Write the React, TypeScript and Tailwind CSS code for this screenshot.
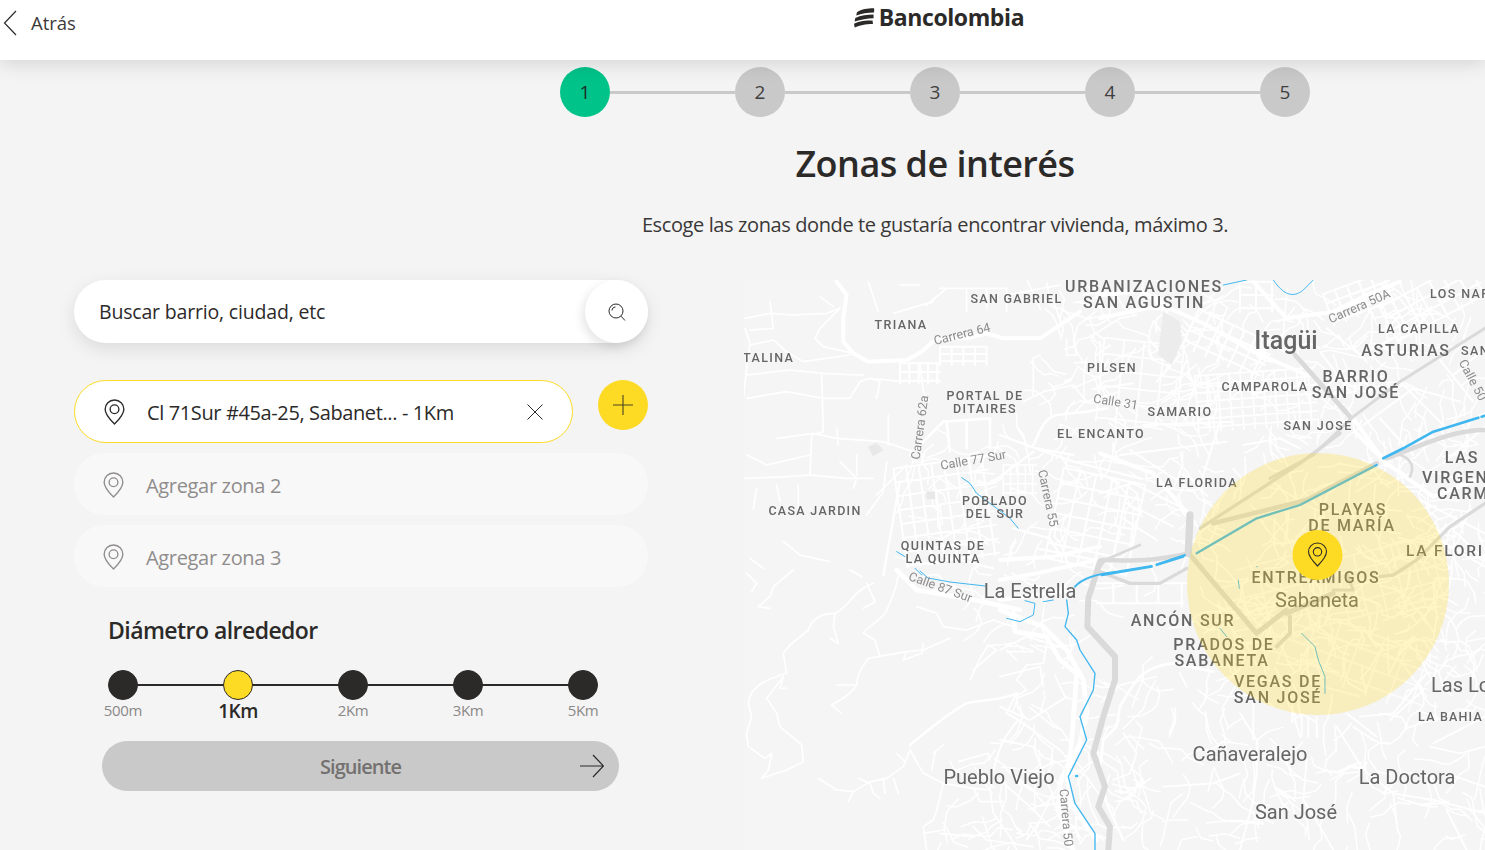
import React from "react";

const Pin = ({ className = "" }: { className?: string }) => (
  <svg viewBox="0 0 20 25" fill="none" stroke="currentColor" strokeWidth="1.3" className={className}>
    <path d="M10 1C4.8 1 1 5 1 9.8C1 15.2 10 24 10 24C10 24 19 15.2 19 9.8C19 5 15.2 1 10 1Z" strokeLinejoin="round" />
    <circle cx="10" cy="9.8" r="4.2" />
  </svg>
);

const grid = (x: number, y: number, w: number, h: number, sx: number, sy: number) => {
  let d = "";
  for (let i = x; i <= x + w; i += sx) d += `M${i} ${y}V${y + h}`;
  for (let j = y; j <= y + h; j += sy) d += `M${x} ${j}H${x + w}`;
  return d;
};

const walk = (seed: number, x: number, y: number, w: number, h: number, n: number, step = 12) => {
  let s = seed;
  const r = () => {
    s = (s * 16807) % 2147483647;
    return (s & 65535) / 65535;
  };
  let d = "";
  for (let i = 0; i < n; i++) {
    let px = x + r() * w;
    let py = y + r() * h;
    let a = r() * 6.28;
    d += `M${px.toFixed(1)} ${py.toFixed(1)}`;
    const len = 2 + Math.floor(r() * 4);
    for (let k = 0; k < len; k++) {
      a += (r() - 0.5) * 1.6;
      px += Math.cos(a) * step * (0.6 + r());
      py += Math.sin(a) * step * (0.6 + r());
      d += `L${px.toFixed(1)} ${py.toFixed(1)}`;
    }
  }
  return d;
};

const B = 16;
const BL = 1.75;
const S = 12.5;
const SL = 1.4;

const labels: [string, number, number, number, number, ("middle" | "start")?][] = [
  ["SAN GABRIEL", 1016.5, 303, S, 1.3],
  ["TRIANA", 901, 329, S, SL],
  ["URBANIZACIONES", 1144, 292, B, BL],
  ["SAN AGUSTIN", 1144, 308, B, BL],
  ["LOS NAR", 1430, 298, S, SL, "start"],
  ["LA CAPILLA", 1419, 333, S, SL],
  ["ASTURIAS", 1406, 356, B, BL],
  ["SAN", 1461, 355, S, SL, "start"],
  ["TALINA", 743, 362, S, SL, "start"],
  ["PILSEN", 1112, 372, S, SL],
  ["PORTAL DE", 985, 400, S, SL],
  ["DITAIRES", 985, 413, S, SL],
  ["CAMPAROLA", 1265, 391, S, SL],
  ["BARRIO", 1356, 382, B, BL],
  ["SAN JOSÉ", 1356, 398, B, BL],
  ["SAMARIO", 1180, 416, S, SL],
  ["SAN JOSE", 1318, 430, S, SL],
  ["EL ENCANTO", 1101, 438, S, SL],
  ["LAS", 1462, 463, B, BL],
  ["VIRGEN", 1422, 483, B, BL, "start"],
  ["CARM", 1437, 499, B, BL, "start"],
  ["LA FLORIDA", 1197, 487, S, SL],
  ["POBLADO", 995, 505, S, SL],
  ["DEL SUR", 995, 518, S, SL],
  ["CASA JARDIN", 815, 515, S, 1.3],
  ["PLAYAS", 1353, 515, B, BL],
  ["DE MARÍA", 1352, 531, B, BL],
  ["QUINTAS DE", 943, 550, S, SL],
  ["LA QUINTA", 943, 563, S, SL],
  ["LA FLORI", 1406, 556, 15.5, BL, "start"],
  ["ENTREAMIGOS", 1316, 583, B, BL],
  ["Sabaneta", 1317, 607, 20, 0],
  ["La Estrella", 1030, 598, 20, 0],
  ["ANCÓN SUR", 1183, 626, B, BL],
  ["PRADOS DE", 1224, 650, B, BL],
  ["SABANETA", 1222, 666, B, BL],
  ["VEGAS DE", 1278, 687, B, BL],
  ["SAN JOSÉ", 1278, 703, B, BL],
  ["Las Lo", 1431, 692, 20, 0, "start"],
  ["LA BAHIA", 1450.5, 721, S, 1.2],
  ["Cañaveralejo", 1250, 761, 20, 0],
  ["Pueblo Viejo", 999, 784, 20, 0],
  ["La Doctora", 1407, 784, 20, 0],
  ["San José", 1296, 819, 20, 0],
];

const roadLabels: [string, number, number, number][] = [
  ["Carrera 64", 963, 338, -14],
  ["Carrera 50A", 1361, 310, -24],
  ["Calle 31", 1115, 406, 9],
  ["Carrera 62a", 924, 428, -82],
  ["Calle 77 Sur", 974, 464, -10],
  ["Carrera 55", 1044, 499, 78],
  ["Calle 50", 1469, 382, 62],
  ["Calle 87 Sur", 939, 591, 20],
  ["Carrera 50", 1062, 818, 85],
];

const MapView = () => (
  <svg viewBox="744 280 741 570" className="block w-full h-full font-['Roboto',sans-serif]">
    <rect x="744" y="280" width="741" height="570" fill="#f5f5f5" />
    <g fill="none" stroke="#ffffff" strokeLinecap="round" strokeLinejoin="round">
      {/* organic street tangles */}
      <g strokeWidth="1.5">
        <path d={walk(11, 905, 440, 190, 170, 70, 9)} />
        <path d={walk(23, 1040, 285, 180, 150, 70, 10)} />
        <path d={walk(37, 1190, 300, 290, 170, 150, 10)} />
        <path d={walk(41, 1200, 480, 260, 220, 170, 10)} />
        <path d={walk(53, 1400, 500, 85, 240, 50, 10)} />
        <path d={walk(67, 1110, 650, 110, 200, 45, 11)} />
        <path d={walk(71, 1210, 720, 275, 130, 70, 11)} />
        <path d={walk(83, 1010, 620, 90, 230, 45, 11)} />
        <path d={walk(97, 940, 770, 140, 80, 28, 11)} />
        <path d={walk(101, 1100, 440, 110, 120, 40, 10)} />
      </g>
      {/* western hills */}
      <g transform="translate(740 570) scale(.3333)" strokeWidth="5">
        <path d="M480 0C470 30 470 60 440 120C430 150 390 160 370 190L405 210L420 260M385 265L500 245L550 240L630 205M500 245L490 270L545 250L550 220" />
        <path d="M385 265C360 300 350 320 350 345L290 345M350 345C330 380 290 395 275 405L305 430" />
        <path d="M400 40C340 60 330 110 285 130C240 130 215 150 205 180L150 225L130 250L140 310C90 325 30 345 25 400L35 440L20 490L25 530L75 565L95 550L85 600L65 625L140 600L190 575L185 525L120 470L110 430L80 385L130 320L120 355H140" />
        <path d="M285 130L280 170L295 220L270 205M160 0L100 50L90 80L55 110L90 115M20 10L50 40L35 65M380 40L405 95L370 115M330 0L365 20" />
        <path d="M235 625L290 660L340 665L325 695M340 665L390 635L440 625L490 590L510 540M355 625L390 640L400 670L420 685M430 625L435 670M460 625L475 670M470 550L495 575" />
        <path strokeWidth="8" d="M510 525C570 475 640 420 680 400C720 390 790 390 830 370" />
        <path d="M510 540L550 610L610 640L700 655L750 660M610 640C600 680 590 730 580 750L550 770L560 840M700 655L720 695L790 695M750 660L760 730L810 800L830 840M580 550L610 525M575 600L585 550M655 575L745 550L750 570" />
        <path strokeWidth="6" d="M800 430L835 450C790 500 770 540 750 660" />
        <path d="M800 430L825 380L860 360L830 330L860 285L910 280L920 225M690 330L720 265L745 225L770 240L700 300M800 245L880 245M830 270L800 240M960 510H985M835 450L960 540L985 570M800 600L880 660L910 700M700 770L740 810L880 830M600 790L700 800M550 790L610 780" />
        <path strokeWidth="14" d="M470 0L530 60L680 85L840 120M820 130L825 185L920 200L960 270L1010 310L1000 450L990 570L960 640L955 720L1000 840" />
        <path strokeWidth="5" d="M530 110L590 130L610 170L680 180L760 150L820 170" />
      </g>
      {/* north-west */}
      <g transform="translate(740 275) scale(.3333)" strokeWidth="5">
        <path d="M290 20L320 60L310 130L310 200L340 235L385 260L500 255L545 230L590 190L680 190L740 175L790 190L900 190L990 130L1020 110" strokeWidth="12" />
        <path d="M300 100L240 160L225 190L250 215L340 235M240 65L280 95M385 20L415 110M480 30H540M460 115L580 80M620 40L560 90M600 40H800V110M680 40V110M740 40V100M800 60L960 30" />
        <path d="M15 130L90 115L160 120L260 115L300 100M15 160L30 205L20 280L10 370M90 80L100 160L30 165M30 210L100 195L140 230L190 260L330 240M20 300L150 285L250 295L350 300L370 300M20 370L140 350L250 370L330 370L360 320L390 310L490 320M245 300L250 470L215 480L210 600M110 490L220 475L290 490L430 500L520 530M290 460L295 510M20 540L80 570L210 540" />
        <path d="M15 610L140 605L210 600L320 610L400 610M50 640L40 700M110 630L120 680M175 630V700M300 560L350 610L340 640M350 540V600M380 720L430 650L440 560M445 420V510M130 800L180 840L270 860M30 850L70 880M410 660L500 570" />
        <path d="M390 310L420 320L410 370M540 270L550 350L570 380M880 360V250L900 240M1000 190L1010 240H980V190M1060 180L1140 130L1190 120M1070 240L1110 210M1080 260V200M850 380L910 350L1000 330L1040 380L1140 350" />
        <path strokeWidth="8" d="M880 510C900 470 910 430 950 420L1040 410L1100 400M510 540L610 440L750 430M750 430V520M620 440L630 530M680 440V520" />
        <path strokeWidth="7" d="M780 480L860 510L1000 560L1200 610M890 520L1000 540M880 530L840 560L760 620" />
        <path strokeWidth="6" transform="rotate(-8 620 710)" d={grid(480, 560, 280, 300, 38, 42)} />
        <path strokeWidth="4.5" d={grid(790, 570, 100, 90, 22, 28)} />
        <path strokeWidth="6" d={grid(480, 265, 120, 60, 28, 26)} />
        <path strokeWidth="6" d={grid(600, 215, 140, 55, 35, 22)} />
        <path strokeWidth="6" transform="rotate(12 1060 740)" d={grid(940, 600, 250, 280, 50, 46)} />
        <path strokeWidth="7" d="M430 900L480 620M600 840L760 880M890 820L1090 860M820 760L930 790L960 840" />
      </g>
      {/* Itagüí and the north-east */}
      <g transform="translate(1100 275) scale(.3333)" strokeWidth="6">
        <path strokeWidth="12" d="M0 130L140 100L210 100L320 150L460 230L620 300M130 50L210 100M0 60L100 50M560 130L700 110L800 60L900 20M460 20L560 130M760 430L860 570" />
        <path transform="rotate(25 385 210)" d={grid(260, 150, 250, 120, 38, 34)} />
        <path strokeWidth="5" transform="rotate(-4 470 375)" d={grid(290, 290, 360, 170, 34, 26)} />
        <path d={grid(420, 20, 100, 90, 48, 40)} />
        <path transform="rotate(-20 780 70)" d={grid(680, 20, 200, 100, 38, 30)} />
        <path transform="rotate(-28 1000 80)" d={grid(850, 20, 300, 120, 42, 38)} />
        <path d="M680 160L780 240L900 180M660 230L750 350M900 320L1040 460M790 450L940 340L1080 380M1000 230L1120 380M840 430L940 540M960 380L1020 440M1060 300L1155 220" />
        <path strokeWidth="5" transform="rotate(6 120 325)" d={grid(0, 200, 240, 250, 60, 48)} />
        <path d="M160 140L240 240L170 320M170 170C160 110 190 130 210 100M360 440L310 600M430 510L540 490L600 520" />
        <path d="M0 340L100 325M130 450L400 440M60 540L380 500" />
      </g>
      {/* central corridor and south */}
      <g transform="translate(1000 540) scale(.3333)" strokeWidth="5.5">
        <path strokeWidth="14" d="M0 210L130 260L200 330L250 420L260 520L240 610L200 690L210 790L290 900" />
        <path strokeWidth="12" d="M0 60L160 50L300 20M0 120L110 100L290 60M0 180L220 150" />
        <path strokeWidth="8" d="M360 500C400 430 420 380 520 370L640 395M360 500L350 560L310 600L300 690L320 790L370 900" />
        <path d="M290 130H560M340 130V190M410 130V190M475 130V190M545 130V200M290 190H550" strokeWidth="6" />
        <path d="M0 330L80 290L180 320M0 410L120 380L130 440M0 500L90 540L200 470M0 600L100 620L130 700M0 720L90 800L150 860M80 900L120 840M370 580L410 640L390 700L340 720M490 740L640 730L720 700M540 400L560 440M760 480V600M720 520L770 600" />
        <path strokeWidth="5.5" d="M880 520L900 590M905 530V590M925 530V590M950 530V590M1040 520L1130 590M1080 530L1180 520L1280 400M1060 560L1120 600M1010 560L1090 690L1180 760L1300 780L1455 820M770 600L770 700L760 780L720 930M920 660L910 780L960 860L1000 930M1180 760L1190 850M1300 610L1455 530M1290 620L1380 640L1455 620M1340 700L1455 740M1170 540L1270 450M1340 810L1400 930" />
        <g transform="translate(560 0)" strokeWidth="5" opacity=".8">
          <path transform="rotate(-14 450 160)" d={grid(120, 60, 660, 200, 58, 46)} />
          <path transform="rotate(20 480 350)" d={grid(220, 260, 520, 180, 70, 50)} />
          <path d="M150 90L420 20M180 200L300 180M420 280L560 340L700 300M380 330L410 440L520 470M640 360L720 470M620 200L780 120" />
        </g>
      </g>
      <g transform="translate(1100 420) scale(.3333)" strokeWidth="6">
        <path strokeWidth="12" d="M770 40L860 130L1000 230L1155 170M0 100L160 160L270 290" />
        <path d="M0 220L100 190L260 270M90 90L230 180M100 260L220 320M60 290L170 360M960 240L1155 340M1060 330L1155 420M1000 350L1155 440M1030 130L1155 20" />
      </g>
    </g>
    {/* highways */}
    <g fill="none" stroke="#dadada" strokeLinecap="round" strokeLinejoin="round">
      <g transform="translate(1100 275) scale(.3333)">
        <path strokeWidth="9" d="M1155 160L900 320L760 425L640 540L510 610" />
        <path strokeWidth="14" d="M585 240L750 425" />
        <path strokeWidth="1" stroke="#ececec" fill="#ececec" d="M190 110L240 140L245 200L215 270L175 240Z" />
      </g>
      <g transform="translate(1100 420) scale(.3333)">
        <path strokeWidth="10" d="M300 325L600 130L720 40" />
        <path strokeWidth="14" d="M340 310L620 240L830 130M860 115C980 70 1060 30 1155 30" />
        <path strokeWidth="8" d="M930 170C950 130 920 105 880 100" />
        <path strokeWidth="10" d="M1155 250L1050 320L950 420L880 465L840 470" />
        <path strokeWidth="22" d="M270 285L265 400" />
      </g>
      <g transform="translate(1000 540) scale(.3333)">
        <path strokeWidth="14" d="M570 40C430 70 380 60 305 60" />
        <path strokeWidth="10" d="M560 85L480 130L390 130L300 95" />
        <path strokeWidth="18" d="M300 65L265 175L262 260L345 350L345 420L310 530L280 640L315 740L295 800L330 860L325 930" />
        <path strokeWidth="15" d="M575 50L770 280L860 210" />
        <path strokeWidth="15" d="M860 220L1000 160" />
        <path strokeWidth="12" d="M870 230L870 280L830 320" />
        <path strokeWidth="9" d="M1000 150L1060 150L1040 100" />
      </g>
      <g transform="translate(740 275) scale(.3333)">
        <path strokeWidth="8" d="M1070 890L1095 855L1200 810" />
        <path strokeWidth="1" fill="#e8e8e8" stroke="#e8e8e8" d="M385 515L410 505L430 525L400 543ZM560 650H585V672H560Z" />
      </g>
    </g>
    {/* water */}
    <g fill="none" stroke="#41b7ef" strokeLinecap="round" strokeLinejoin="round">
      <g transform="translate(1100 275) scale(.3333)">
        <path strokeWidth="8" d="M850 550L910 520L1000 470L1135 428M1145 425L1155 422" />
        <path strokeWidth="3" d="M370 30L440 15M520 15C550 60 580 70 610 45L640 15" />
      </g>
      <g transform="translate(1100 420) scale(.3333)">
        <path strokeWidth="7" d="M290 400L470 295L600 255L830 135" />
        <path strokeWidth="7" d="M5 465L155 440M170 435L250 410" />
      </g>
      <g transform="translate(1000 540) scale(.3333)">
        <path strokeWidth="6" d="M225 140C250 110 300 100 350 95L455 78M470 73L555 45" />
        <path strokeWidth="4" d="M200 180L205 220L195 260L230 300L240 330L285 400L280 450L240 530L260 600L205 710L225 790L285 880L285 930" />
        <path strokeWidth="3" d="M75 182L105 190L100 225L60 245L20 235M130 185L160 180" />
        <path strokeWidth="8" d="M229 708H231" />
        <path strokeWidth="3" d="M715 120L718 145M660 265L680 290M905 280L945 320L955 360L975 410L975 460M770 80H772" />
      </g>
      <g transform="translate(740 275) scale(.3333)" strokeWidth="3">
        <path d="M665 608L690 625L710 655L770 700L810 730L835 760M470 830L495 845M525 880L545 900" />
      </g>
      <path strokeWidth="1" d="M920 571L928 578L950 582L985 586" />
    </g>
    {/* road names */}
    <g fill="#8c8c8c" fontSize="12.5" textAnchor="middle">
      {roadLabels.map(([t, x, y, r]) => (
        <text key={t} x={x} y={y} transform={`rotate(${r} ${x} ${y})`}>{t}</text>
      ))}
    </g>
    {/* places */}
    <g fill="#666666">
      {labels.map(([t, x, y, s, ls, a], i) => (
        <text key={i} x={x} y={y} fontSize={s} letterSpacing={ls} fontWeight={ls === 0 ? 400 : 500} textAnchor={a ?? "middle"}>{t}</text>
      ))}
      <text x="1286" y="349" fontSize="25" fontWeight="500" textAnchor="middle">Itagüi</text>
    </g>
    <circle cx="1318" cy="584" r="131" fill="#ffd91e" fillOpacity=".26" />
    <circle cx="1317.5" cy="555" r="25" fill="#fdda24" />
    <g transform="translate(1307.5 542)" fill="none" stroke="#2c2a29" strokeWidth="1.1">
      <path d="M10 1C4.8 1 1 5 1 9.6C1 15 10 24 10 24C10 24 19 15 19 9.6C19 5 15.2 1 10 1Z" />
      <circle cx="10" cy="9.8" r="4.2" />
    </g>
  </svg>
);

export default function App() {
  return (
    <div className="w-[1485px] h-[850px] overflow-hidden bg-[#f4f4f4] text-[#2c2a29] font-['Open_Sans',sans-serif]">
      <header className="relative z-10 h-[60px] bg-white shadow-[0_4px_18px_rgba(0,0,0,0.13)] flex items-start">
        <a className="flex items-center h-[46px] pl-[3px] gap-[14px]">
          <svg width="14" height="26" viewBox="0 0 14 26" fill="none" stroke="#2c2a29" strokeWidth="1.2"><path d="M13 1L1.5 13L13 25" /></svg>
          <span className="text-[18.5px] tracking-[-0.05px] text-[#3c3a39]">Atrás</span>
        </a>
        <div className="ml-[777px] mt-[4px] flex items-center gap-[4px]">
          <svg width="22" height="21" viewBox="0 0 22 21" fill="#2c2a29">
            <path d="M4 5.2C9 1.8 14 1.5 21 1.3C21 1.3 21.5 3 21 5.4C14 5.5 9 6.4 3.2 8.4Z" />
            <path d="M2.3 11C8 8 14 7.6 20.5 7.5L20.6 11.3C14 11.5 8 12.5 1.6 14.6Z" />
            <path d="M1 16.7C7 13.9 12 13.4 19.5 13.4L20 17C12 17 7 18.6 1.7 20.4Z" />
          </svg>
          <span className="text-[23px] font-bold leading-[26px] tracking-[-0.4px] text-[#2c2a29]">Bancolombia</span>
        </div>
      </header>

      <main>
        <ol className="ml-[560px] mt-[7px] w-[750px] flex items-center">
          {[1, 2, 3, 4, 5].map((n) => (
            <React.Fragment key={n}>
              <li className={`w-[50px] h-[50px] shrink-0 rounded-full flex items-center justify-center text-[19px] ${n === 1 ? "bg-[#00c389] text-[#1e2a26]" : "bg-[#c9c9c9] text-[#3f3f3f]"}`}>{n}</li>
              {n < 5 && <span className="flex-1 h-[3px] bg-[#c9c9c9]" />}
            </React.Fragment>
          ))}
        </ol>

        <h1 className="ml-[385px] w-[1100px] mt-[22px] text-center text-[36px] leading-[50px] font-semibold tracking-[-0.52px]">Zonas de interés</h1>
        <p className="ml-[385px] w-[1100px] mt-[21px] text-center text-[20px] leading-[30px] tracking-[-0.39px] text-[#3a3837]">Escoge las zonas donde te gustaría encontrar vivienda, máximo 3.</p>

        <div className="flex mt-[40px] h-[570px]">
          <section className="ml-[74px] w-[574px] shrink-0">
            <div className="flex items-center h-[63px] rounded-full bg-white shadow-[0_6px_18px_rgba(0,0,0,0.10)]">
              <span className="flex-1 pl-[25px] text-[19.5px] tracking-[-0.18px] text-[#2c2a29]">Buscar barrio, ciudad, etc</span>
              <span className="w-[63px] h-[63px] rounded-full bg-white shadow-[-3px_4px_10px_rgba(0,0,0,0.10)] flex items-center justify-center">
                <svg width="20" height="20" viewBox="0 0 20 20" fill="none" stroke="#2c2a29" strokeWidth="1"><circle cx="9" cy="9" r="7" /><path d="M14 14.2L18 18.5M5 8.5C5 6.5 6.5 5 8.5 5" /></svg>
              </span>
            </div>

            <div className="flex items-start mt-[37px]">
              <div className="w-[499px] h-[63px] rounded-full bg-white border border-[#fdda24] flex items-center pl-[29px] pr-[27px]">
                <Pin className="w-[21px] h-[26px] text-[#2c2a29] shrink-0" />
                <span className="ml-[22px] pt-[2px] flex-1 text-[20px] tracking-[-0.38px] text-[#2c2a29]">Cl 71Sur #45a-25, Sabanet... - 1Km</span>
                <svg width="20" height="20" viewBox="0 0 20 20" fill="none" stroke="#2c2a29" strokeWidth="1"><path d="M2.5 2.5L17.5 17.5M17.5 2.5L2.5 17.5" /></svg>
              </div>
              <button className="ml-[25px] w-[50px] h-[50px] rounded-full bg-[#fdda24] flex items-center justify-center">
                <svg width="24" height="24" viewBox="0 0 24 24" fill="none" stroke="#4a4420" strokeWidth="1.1"><path d="M12 2V22M2 12H22" /></svg>
              </button>
            </div>

            {[2, 3].map((n) => (
              <div key={n} className="mt-[10px] h-[62px] rounded-full bg-[#f8f8f8] flex items-center pl-[29px] pt-[2px] text-[#8f8d8c]">
                <Pin className="w-[21px] h-[26px] shrink-0" />
                <span className="ml-[22px] pt-[1px] text-[20px] tracking-[-0.33px]">Agregar zona {n}</span>
              </div>
            ))}

            <h2 className="ml-[34px] mt-[25px] text-[23px] leading-[36px] font-semibold tracking-[-0.55px]">Diámetro alrededor</h2>

            <div className="relative ml-[29px] mt-[22px] w-[500px]">
              <span className="absolute left-[20px] right-[20px] top-[14px] h-[2px] bg-[#2c2a29]" />
              <ul className="relative flex justify-between">
                {["500m", "1Km", "2Km", "3Km", "5Km"].map((t, i) => (
                  <li key={t} className="w-[40px] flex flex-col items-center">
                    <span className={`w-[30px] h-[30px] rounded-full border border-[#2c2a29] ${i === 1 ? "bg-[#fdda24]" : "bg-[#2c2a29]"}`} />
                    <span className={`whitespace-nowrap ${i === 1 ? "leading-[22px] text-[19px] font-semibold tracking-[-0.5px] text-[#2c2a29]" : "leading-[20px] text-[15px] tracking-[-0.3px] text-[#8a8887]"}`}>{t}</span>
                  </li>
                ))}
              </ul>
            </div>

            <button className="relative ml-[28px] mt-[19px] w-[517px] h-[50px] rounded-full bg-[#c9c9c9] flex items-center justify-center pt-[1px] text-[20px] font-semibold tracking-[-0.95px] text-[#737170]">
              Siguiente
              <svg className="absolute right-[15px] top-[13px]" width="24" height="24" viewBox="0 0 24 24" fill="none" stroke="#2c2a29" strokeWidth="1.2"><path d="M0 12H23M13 1L23.5 12L13 23" /></svg>
            </button>
          </section>

          <div className="ml-[96px] flex-1 blur-[0.4px] overflow-hidden">
            <MapView />
          </div>
        </div>
      </main>
    </div>
  );
}
